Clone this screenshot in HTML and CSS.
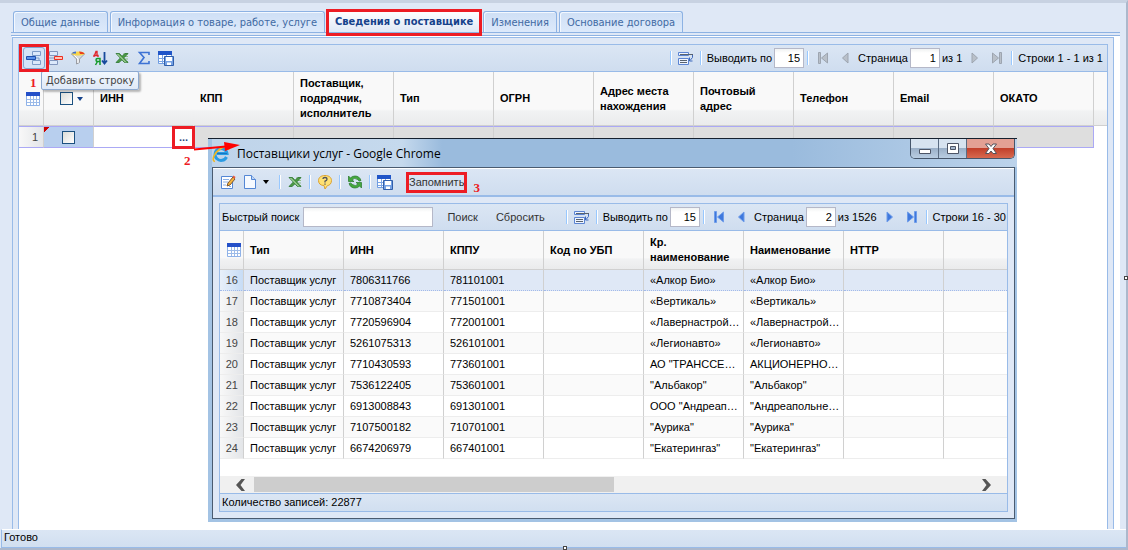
FILE: index.html
```html
<!DOCTYPE html>
<html lang="ru">
<head>
<meta charset="utf-8">
<title>Сведения о поставщике</title>
<link rel="stylesheet" href="styles.css">
</head>
<body>
<svg class="sprite" aria-hidden="true">
  <symbol id="grid" viewBox="0 0 14 14"><path d="M.5.5h13v13H.5z" fill="#fff" stroke="#8fb2e8"/><path d="M0 0h14v4H0z" fill="#2450c8"/><path d="M1 7.500h12M1 10.500h12M4.500 4v9M7.500 4v9M10.500 4v9" stroke="#9dbbe8"/></symbol>
  <symbol id="excel" viewBox="0 0 16 16"><path d="M9 4h5M9 6.500h5M8 9h6M9 11.500h5" stroke="#8fbd85"/><path d="M2 3.500h3.500L8 6.300l3-2.800h3L9.700 8l4.300 4.500h-3.500L8 9.800l-3 2.700H2L6.300 8z" fill="#4d9a45" stroke="#2b7530" stroke-width=".8"/><path d="M3.500 4l8.500 8.500" stroke="#d3ecc8"/></symbol>
  <symbol id="save-grid" viewBox="0 0 16 16"><path d="M.5 1.500h13v12H.5z" fill="#fff" stroke="#6f9de2"/><path d="M0 1h14v4H0z" fill="#2055c8"/><path d="M1 8.500h7M1 11.500h6M4.500 5v8M8.500 5v3" stroke="#7ca5e4"/><path d="M6.500 6.500h9v9h-9z" fill="#75a1e3" stroke="#315fab"/><path d="M8 7h6v4H8zM9 12.500h4V15H9z" fill="#fff"/></symbol>
  <symbol id="pages" viewBox="0 0 17 15"><path d="M1.500 1.500h10v3h-10zM1.500 7.500h10v6h-10z" fill="#eef4ff" stroke="#5b84d2"/><path d="M3 3.500h13M3 9.500h7M3 11.500h7" stroke="#59636e"/><path d="M15.500 4v2.500L13 9.500M12.500 6.500v3.500h3" fill="none" stroke="#3d68bd"/></symbol>
  <symbol id="first" viewBox="0 0 12 12"><path d="M1.500.5v11h2V.5zM10.500 1v10L4.500 6z" fill="var(--fill)" stroke="var(--line)"/></symbol>
  <symbol id="prev" viewBox="0 0 12 12"><path d="M9 1v10L3.500 6z" fill="var(--fill)" stroke="var(--line)"/></symbol>
  <symbol id="next" viewBox="0 0 12 12"><path d="M3 1v10l5.500-5z" fill="var(--fill)" stroke="var(--line)"/></symbol>
  <symbol id="last" viewBox="0 0 12 12"><path d="M8.500.5v11h2V.5zM1.500 1v10l6-5z" fill="var(--fill)" stroke="var(--line)"/></symbol>
</svg>
<div class="page">
  <nav class="tabs">
    <button class="tab">Общие данные</button>
    <button class="tab">Информация о товаре, работе, услуге</button>
    <button class="tab active marked">Сведения о поставщике</button>
    <button class="tab">Изменения</button>
    <button class="tab">Основание договора</button>
  </nav>
  <main class="workspace">
    <section class="panel">
      <div class="grid-box">
        <div class="toolbar">
          <span class="tool-wrap">
            <button class="tool pressed marked" aria-label="Добавить строку"><svg width="16" height="16" viewBox="0 0 16 16"><path d="M6.500 1.500h8v4h-8zM6.500 10.500h8v4h-8z" fill="#dce9fb" stroke="#7d9cc9"/><path d="M.5 6.500h9v3h-9z" fill="#5a92ea" stroke="#1f4fae"/><path d="M10 8h3v2" fill="none" stroke="#7d9cc9"/></svg></button>
            <span class="tooltip" role="tooltip">Добавить строку</span>
          </span>
          <button class="tool" aria-label="Удалить строку"><svg width="16" height="16" viewBox="0 0 16 16"><path d="M1.500 1.500h8v4h-8zM1.500 10.500h8v4h-8z" fill="#dce9fb" stroke="#8296bd"/><path d="M6.500 6.500h8v3h-8z" fill="#ffc3b5" stroke="#ee2f20"/><path d="M1 8h5" stroke="#8296bd"/></svg></button>
          <button class="tool" aria-label="Фильтр"><svg width="16" height="16" viewBox="0 0 16 16"><path d="M1.500 4l5 5v5l3-1.500V9l5-5z" fill="#d5d9df" stroke="#9a9ca2"/><path d="M4 5l4 4v4" fill="none" stroke="#fff"/><ellipse cx="8" cy="3.500" rx="6.500" ry="2" fill="#f7d54b"/><path d="M1.500 3.500Q3 1.500 6 1.500v2z" fill="#3d70d6"/><path d="M9 1.500q5 0 5.500 2.500H10z" fill="#e9401f"/></svg></button>
          <button class="tool" aria-label="Сортировка"><svg width="16" height="16" viewBox="0 0 16 16"><path d="M2 7V5.500h4V7M2.500 5.500L4 1.500h1V5.500" fill="none" stroke="#e0282f" stroke-width="1.400"/><path d="M8 15V8.500H5.500Q4 8.500 4 10t1.500 1.500H8M5.500 11.500L3.500 15" fill="none" stroke="#159a2b" stroke-width="1.500"/><path d="M12.500 2v11M10 10.500l2.500 3 2.500-3" fill="none" stroke="#174a9c" stroke-width="1.800"/></svg></button>
          <button class="tool" aria-label="Экспорт в Excel"><svg width="16" height="16"><use href="#excel"/></svg></button>
          <button class="tool" aria-label="Итоги"><svg width="16" height="16" viewBox="0 0 16 16"><path d="M13 5V2.500H3.500l4.500 5-4.500 6H13V11" fill="none" stroke="#3d72d4" stroke-width="1.600"/></svg></button>
          <button class="tool" aria-label="Сохранить вид"><svg width="16" height="16"><use href="#save-grid"/></svg></button>
          <div class="pager muted">
            <i class="sep"></i>
            <button class="tool" aria-label="Страницы"><svg width="17" height="15"><use href="#pages"/></svg></button>
            <i class="sep"></i>
            <label for="size-a">Выводить по</label><input class="num" id="size-a" value="15">
            <i class="sep"></i>
            <button class="tool" aria-label="Первая"><svg width="12" height="12"><use href="#first"/></svg></button>
            <button class="tool" aria-label="Назад"><svg width="12" height="12"><use href="#prev"/></svg></button>
            <label class="page-label" for="page-a">Страница</label><input class="num" id="page-a" value="1"><span class="total">из 1</span>
            <button class="tool" aria-label="Вперёд"><svg width="12" height="12"><use href="#next"/></svg></button>
            <button class="tool" aria-label="Последняя"><svg width="12" height="12"><use href="#last"/></svg></button>
            <i class="sep"></i>
            <span>Строки 1 - 1 из 1</span>
          </div>
        </div>
        <table class="grid main-grid">
          <colgroup><col class="c-num"><col class="c-check"><col class="c-std"><col class="c-std"><col class="c-std"><col class="c-std"><col class="c-std"><col class="c-std"><col class="c-std"><col class="c-std"><col class="c-std"><col class="c-std"><col></colgroup>
          <thead><tr>
            <th class="icon-cell"><svg width="14" height="14"><use href="#grid"/></svg></th>
            <th><div class="check-head"><input type="checkbox" aria-label="Выбрать все"><i class="caret"></i></div></th>
            <th class="open">ИНН</th><th>КПП</th><th>Поставщик,<br>подрядчик,<br>исполнитель</th><th>Тип</th><th>ОГРН</th><th>Адрес места<br>нахождения</th><th>Почтовый<br>адрес</th><th>Телефон</th><th>Email</th><th>ОКАТО</th><th class="tail"></th>
          </tr></thead>
          <tbody><tr>
            <td class="num-cell">1</td>
            <td class="check-cell dirty"><input type="checkbox" aria-label="Выбрать строку 1"></td>
            <td class="edit-cell"><button class="more marked">...</button></td>
            <td></td><td></td><td></td><td></td><td></td><td></td><td></td><td></td><td class="row-end"></td><td class="tail"></td>
          </tr></tbody>
        </table>
      </div>
    </section>
  </main>
  <footer class="status">Готово</footer>

  <section class="window" role="dialog" aria-labelledby="win-title">
    <header class="titlebar">
      <svg width="18" height="18" viewBox="0 0 18 18"><path d="M14.500 12A6 6 0 1 1 15 8.500H5" fill="none" stroke="#2a9be3" stroke-width="3"/><path d="M5 8.500h10" stroke="#1476c4"/><path d="M3 16.500C-1 16 2 8 8 4s10-3 8.500 1" fill="none" stroke="#f3b81e" stroke-width="1.600"/></svg>
      <h1 id="win-title">Поставщики услуг - Google Chrome</h1>
      <div class="win-buttons">
        <button aria-label="Свернуть"><svg width="14" height="12" viewBox="0 0 14 12"><path d="M1.500 6.500h11v4h-11z" fill="#fff" stroke="#4d5566"/></svg></button>
        <button aria-label="Развернуть"><svg width="14" height="12" viewBox="0 0 14 12"><path d="M1.500.5h11v10h-11z" fill="#fff" stroke="#4d5566"/><path d="M4.500 3.500h5v3h-5z" fill="#a4b6cc" stroke="#4d5566"/></svg></button>
        <button class="close" aria-label="Закрыть"><svg width="14" height="12" viewBox="0 0 14 12"><path d="M1.500 1h3.500l2 2.500L9 1h3.500L9 5.500l3.500 5H9L7 8l-2 2.500H1.500L5 5.500z" fill="#fff" stroke="#53515a"/></svg></button>
      </div>
    </header>
    <div class="win-body">
      <div class="toolbar win-tools">
        <button class="tool" aria-label="Изменить"><svg width="16" height="16" viewBox="0 0 16 16"><path d="M1.500 2.500h11v12h-11z" fill="#fff" stroke="#5487d5"/><path d="M3 5.500h6M3 8h5M3 11h3M9 12.500h2" stroke="#8bb0e6"/><path d="M7 12l1-3 5-6 2 2-5 6z" fill="#f5b33d" stroke="#7a5630"/><path d="M12.500 3l1-1.500L15.500 3l-1 2z" fill="#e55b40"/></svg></button>
        <button class="tool" aria-label="Создать"><svg width="16" height="16" viewBox="0 0 16 16"><path d="M2.500 1.500h7l4 4v9h-11z" fill="#f6faff" stroke="#5487d5"/><path d="M9.500 1.500v4h4" fill="#bfd6f5" stroke="#5487d5"/></svg></button>
        <button class="drop" aria-label="Варианты"><i class="caret dark"></i></button>
        <i class="sep"></i>
        <button class="tool" aria-label="Экспорт в Excel"><svg width="16" height="16"><use href="#excel"/></svg></button>
        <i class="sep"></i>
        <button class="tool" aria-label="Справка"><svg width="16" height="16" viewBox="0 0 16 16"><path d="M8 1.500c4 0 6.500 2 6.500 5s-2 5-4 5L8 15l-1-3.500c-3.500 0-5.500-2-5.500-5s2.500-5 6.500-5z" fill="#ffe173" stroke="#dba133"/><path d="M6 5q0-1.500 2-1.500T10 5.300Q10 6.500 8 7.200V8.500M8 9.500v1.200" fill="none" stroke="#52545c" stroke-width="1.300"/></svg></button>
        <i class="sep"></i>
        <button class="tool" aria-label="Обновить"><svg width="16" height="16" viewBox="0 0 16 16"><path d="M1.500 2v5.500H7L5 6q2.500-3 5.500-.5Q12.500 8 14 6.500 12.500 2 8 2 5 2 3.500 4z" fill="#45a73e" stroke="#26772a" stroke-width=".7"/><path d="M14.500 14V8.500H9L11 10q-2.500 3-5.500.5Q3.500 8 2 9.500 3.500 14 8 14q3 0 4.500-2z" fill="#45a73e" stroke="#26772a" stroke-width=".7"/></svg></button>
        <i class="sep"></i>
        <button class="tool" aria-label="Сохранить вид"><svg width="16" height="16"><use href="#save-grid"/></svg></button>
        <button class="text-btn remember marked">Запомнить</button>
        <span class="step step-three">3</span>
      </div>
      <div class="win-panel">
        <div class="toolbar">
          <label for="quick">Быстрый поиск</label><input class="search" id="quick">
          <button class="text-btn">Поиск</button><button class="text-btn">Сбросить</button>
          <div class="pager">
            <i class="sep"></i>
            <button class="tool" aria-label="Страницы"><svg width="17" height="15"><use href="#pages"/></svg></button>
            <i class="sep"></i>
            <label for="size-b">Выводить по</label><input class="num" id="size-b" value="15">
            <i class="sep"></i>
            <button class="tool" aria-label="Первая"><svg width="12" height="12"><use href="#first"/></svg></button>
            <button class="tool" aria-label="Назад"><svg width="12" height="12"><use href="#prev"/></svg></button>
            <label class="page-label" for="page-b">Страница</label><input class="num" id="page-b" value="2"><span class="total">из 1526</span>
            <button class="tool" aria-label="Вперёд"><svg width="12" height="12"><use href="#next"/></svg></button>
            <button class="tool" aria-label="Последняя"><svg width="12" height="12"><use href="#last"/></svg></button>
            <i class="sep"></i>
            <span>Строки 16 - 30</span>
          </div>
        </div>
        <table class="grid list-grid">
          <colgroup><col class="c-num"><col class="c-std"><col class="c-std"><col class="c-std"><col class="c-std"><col class="c-std"><col class="c-std"><col class="c-std"><col></colgroup>
          <thead><tr><th class="icon-cell"><svg width="14" height="14"><use href="#grid"/></svg></th><th>Тип</th><th>ИНН</th><th>КППУ</th><th>Код по УБП</th><th>Кр.<br>наименование</th><th>Наименование</th><th>HTTP</th><th></th></tr></thead>
          <tbody>
            <tr class="selected"><td class="num-cell">16</td><td>Поставщик услуг</td><td>7806311766</td><td>781101001</td><td></td><td>«Алкор Био»</td><td>«Алкор Био»</td><td></td><td></td></tr>
            <tr><td class="num-cell">17</td><td>Поставщик услуг</td><td>7710873404</td><td>771501001</td><td></td><td>«Вертикаль»</td><td>«Вертикаль»</td><td></td><td></td></tr>
            <tr><td class="num-cell">18</td><td>Поставщик услуг</td><td>7720596904</td><td>772001001</td><td></td><td>«Лавернастрой…</td><td>«Лавернастрой…</td><td></td><td></td></tr>
            <tr><td class="num-cell">19</td><td>Поставщик услуг</td><td>5261075313</td><td>526101001</td><td></td><td>«Легионавто»</td><td>«Легионавто»</td><td></td><td></td></tr>
            <tr><td class="num-cell">20</td><td>Поставщик услуг</td><td>7710430593</td><td>773601001</td><td></td><td>АО "ТРАНССЕ…</td><td>АКЦИОНЕРНО…</td><td></td><td></td></tr>
            <tr><td class="num-cell">21</td><td>Поставщик услуг</td><td>7536122405</td><td>753601001</td><td></td><td>"Альбакор"</td><td>"Альбакор"</td><td></td><td></td></tr>
            <tr><td class="num-cell">22</td><td>Поставщик услуг</td><td>6913008843</td><td>691301001</td><td></td><td>ООО "Андреап…</td><td>"Андреапольне…</td><td></td><td></td></tr>
            <tr><td class="num-cell">23</td><td>Поставщик услуг</td><td>7107500182</td><td>710701001</td><td></td><td>"Аурика"</td><td>"Аурика"</td><td></td><td></td></tr>
            <tr><td class="num-cell">24</td><td>Поставщик услуг</td><td>6674206979</td><td>667401001</td><td></td><td>"Екатерингаз"</td><td>"Екатерингаз"</td><td></td><td></td></tr>
          </tbody>
        </table>
        <div class="scroll">
          <button aria-label="Влево"><svg width="10" height="12" viewBox="0 0 10 12"><path d="M9 0H5.500L0 6l5.500 6H9L4.500 6z" fill="#555"/></svg></button>
          <div class="track"><div class="thumb"></div></div>
          <button aria-label="Вправо"><svg width="10" height="12" viewBox="0 0 10 12"><path d="M1 0h3.500L10 6l-5.500 6H1l4.500-6z" fill="#555"/></svg></button>
        </div>
        <div class="count">Количество записей: 22877</div>
      </div>
    </div>
  </section>

  <span class="step step-one">1</span>
  <span class="step step-two">2</span>
  <svg class="arrow" width="48" height="12" viewBox="0 0 48 12"><path d="M0 10.500l32-3" stroke="#f00" stroke-width="2"/><path d="M30 3l16 3-15 6z" fill="#f00"/></svg>
  <i class="handle bottom"></i><i class="handle side"></i>
</div>
</body>
</html>
```
FILE: styles.css
```css
:root {
  --edge: #99bbe8;
  --pale: #dfe8f6;
  --red: #ed1c24;
  --ui: "Liberation Sans", Arial, sans-serif;
  --tahoma: "DejaVu Sans Condensed", "DejaVu Sans", sans-serif;
}

* { box-sizing: border-box; }

body {
  margin: 0;
  font: 11px/15px var(--ui);
  color: #000;
}

button, input { font: inherit; color: inherit; margin: 0; }
button { padding: 0; border: 0; background: none; }
.sprite { position: absolute; width: 0; height: 0; }

.page {
  position: relative;
  display: flex;
  flex-direction: column;
  min-height: 100vh;
  border-top: 3px solid #c8d2e2;
  border-right: 2px solid #acb8cc;
  border-bottom: 2px solid #acb8cc;
  background: var(--pale);
}

.marked { position: relative; }
.marked::after {
  content: "";
  position: absolute;
  z-index: 3;
  inset: -3px;
  border: 3px solid var(--red);
}

/* Tabs */
.tabs {
  display: flex;
  align-items: flex-end;
  gap: 2px;
  height: 33px;
  margin: 0 6px 0 11px;
  padding: 0 2px 3px;
  border-bottom: 1px solid #8db2e3;
  background: linear-gradient(#8db2e3, #8db2e3) 0 29px / 100% 1px no-repeat;
}
.tab {
  height: 21px;
  padding: 0 7px;
  border: 1px solid #8db2e3;
  border-bottom: 0;
  border-radius: 3px 3px 0 0;
  background: linear-gradient(#cfdff5, #dce9fb);
  box-shadow: inset 1px 1px #f3f8ff;
  font-family: var(--tahoma);
  color: #416aa3;
  white-space: nowrap;
}
.tab.active {
  height: 22px;
  background: linear-gradient(#fff, #dfe8f6);
  color: #15428b;
  font-weight: bold;
}
.tab.active::after { inset: -2px -2px -4px; }

/* Main panel */
.workspace {
  flex: 1;
  display: flex;
  margin: 0 6px 0 12px;
  padding: 1px 6px 0 0;
  background: #fff;
}
.panel {
  flex: 1;
  display: flex;
  min-width: 0;
  padding: 6px 5px 0;
  border: 1px solid var(--edge);
  border-bottom: 0;
  background: var(--pale);
}
.grid-box {
  flex: 1;
  min-width: 0;
  border: 1px solid var(--edge);
  border-bottom: 0;
  background: #fff;
}

/* Toolbars */
.toolbar {
  display: flex;
  align-items: center;
  height: 27px;
  padding: 0 4px;
  border-bottom: 1px solid var(--edge);
  background: linear-gradient(#dbe6f4, #cfddef);
  white-space: nowrap;
}
.tool {
  display: flex;
  flex: none;
  align-items: center;
  justify-content: center;
  width: 22px;
  height: 22px;
}
.tool-wrap { position: relative; }
.pressed {
  border: 1px solid #81a4d0;
  border-radius: 3px;
  background: #d4e3f7;
}
.tool svg { flex: none; }
.pressed.marked::after { inset: -4px -5px; }
.tooltip {
  position: absolute;
  z-index: 2;
  top: 24px;
  left: 18px;
  height: 19px;
  padding: 1px 4px;
  border: 1px solid #8da9cf;
  border-radius: 2px;
  background: linear-gradient(#f3f8fe, #dfe9f7);
  box-shadow: 2px 2px 2px #0004;
  font-family: var(--tahoma);
  color: #444;
}
.sep {
  flex: none;
  width: 2px;
  height: 14px;
  margin: 0 3px;
  border-left: 1px solid #98c8ff;
  border-right: 1px solid #fff;
}
.pager {
  --fill: #3f78dd;
  --line: #6e9ce9;
  display: flex;
  align-items: center;
  margin-left: auto;
}
.pager.muted { --fill: #b9c0c9; --line: #9da5b0; }
.pager .sep + label, .pager .sep + span { margin-left: 2px; }
.pager label { margin-right: 2px; }
.page-label { margin-left: 2px; }
.total { margin: 0 2px; }
.num, .search {
  width: 30px;
  height: 20px;
  padding: 0 3px;
  border: 1px solid #b5b8c8;
  background: linear-gradient(#f0f2f2, #fff 4px);
  text-align: right;
}
.search { width: 130px; margin: 0 7px 0 4px; text-align: left; }
.text-btn { height: 19px; padding: 0 7px; color: #333; }
.text-btn + .text-btn { margin-left: 4px; }

/* Grids */
.grid {
  width: 100%;
  table-layout: fixed;
  border-collapse: separate;
  border-spacing: 0;
}
.c-num { width: 25px; }
.c-check { width: 50px; }
.c-std { width: 100px; }
.grid th, .grid td {
  overflow: hidden;
  padding: 0 6px;
  border-right: 1px solid #d0d0d0;
  text-align: left;
  white-space: nowrap;
}
.grid th {
  border-bottom: 1px solid #d0d0d0;
  background: linear-gradient(#f9f9f9 70%, #f1f2f3 74%, #eaebec);
}
.grid th:last-child, .grid td:last-child { border-right: 0; }
.grid th.icon-cell { padding: 0 0 0 7px; }
.grid .icon-cell svg { display: block; }
.grid .num-cell {
  padding: 0 5px 0 0;
  background: linear-gradient(90deg, #f8f8f8, #e3e5e8);
  color: #444;
  text-align: right;
}
.main-grid th { height: 54px; }
.grid th.open { border-right-color: transparent; }
.main-grid td {
  height: 22px;
  border-top: 1px solid #aba9f5;
  border-bottom: 1px solid #aba9f5;
  background: #dedede;
}
.main-grid td.tail { border: 0; background: #fff; }
.main-grid td.row-end { border-right-color: #aba9f5; }
.main-grid td.check-cell {
  background: linear-gradient(135deg, #c00 4px, transparent 4px), #b8cfee;
  text-align: center;
}
.main-grid td.edit-cell { overflow: visible; padding: 0 1px 0 0; background: #fff; text-align: right; }
.more { width: 17px; height: 17px; font-weight: bold; line-height: 12px; color: #2b4f83; }
input[type="checkbox"] {
  appearance: none;
  display: inline-block;
  width: 13px;
  height: 13px;
  border: 1px solid #1c5180;
  background: linear-gradient(135deg, #dcdcd7, #fff);
  vertical-align: middle;
}
.check-head { display: flex; align-items: center; gap: 4px; padding-left: 10px; }
.caret {
  width: 6px;
  border: 3px solid transparent;
  border-top: 4px solid #15428b;
  border-bottom: 0;
}
.caret.dark { border-top-color: #000; }

/* Status bar */
.status {
  height: 19px;
  margin-left: 1px;
  padding: 0 2px;
  border: 1px solid var(--edge);
  border-top-color: #fff;
  border-right: 0;
  background: linear-gradient(#dbe6f4, #d1dff0);
}

/* Floating window */
.window {
  position: absolute;
  top: 135px;
  left: 208px;
  right: 109px;
  padding: 0 2px 3px 4px;
  border-top: 1px solid #15202e;
  background: #a3c3e4;
}
.titlebar {
  display: flex;
  align-items: flex-start;
  gap: 7px;
  height: 28px;
  margin-right: -2px;
  padding: 6px 2px 0 0;
  background: linear-gradient(90deg, #bfd4ea, #c5d9ed 190px, #9abbdd 230px 580px, #bcd3eb);
}
.titlebar h1 {
  margin: 0;
  font: 12px/17px "Open Sans", "Noto Sans", sans-serif;
  white-space: nowrap;
}
.win-buttons {
  display: flex;
  align-self: flex-start;
  height: 20px;
  margin: -6px 0 0 auto;
  border: 1px solid #46566b;
  border-top: 0;
  border-radius: 0 0 5px 5px;
  overflow: hidden;
}
.win-buttons button {
  display: flex;
  align-items: center;
  justify-content: center;
  width: 28px;
  border-right: 1px solid #5b6c82;
  background: linear-gradient(#d7e3f0 45%, #9bb0c8 50%, #b9cde2);
}
.win-buttons .close {
  width: 47px;
  border-right: 0;
  background: linear-gradient(#e3a094 45%, #c2402b 50%, #d7694f);
}
.win-body {
  padding-bottom: 6px;
  border: 1px solid #4a5b70;
  background: var(--pale);
}
.win-tools {
  height: 29px;
  border-top: 1px solid #fff;
  border-bottom-width: 2px;
}
.drop { width: 10px; margin-right: 5px; }
.drop .caret { display: block; margin: auto; }
.remember { padding: 0; margin-left: 13px; height: 15px; }
.win-panel {
  margin: 6px 6px 0;
  border: 1px solid var(--edge);
  background: #fff;
}
.win-panel .toolbar { padding: 0 1px 0 2px; }
.list-grid { margin-bottom: 17px; }
.list-grid th { height: 39px; }
.list-grid td { height: 21px; border-bottom: 1px solid #ededed; }
.list-grid .c-num { width: 24px; }
.list-grid tr:nth-child(even) td:not(.num-cell) { background: #fafafa; }
.list-grid tr.selected td { border-bottom: 1px dotted #a3bae9; background: var(--pale); }
.list-grid tr.selected .num-cell { background: linear-gradient(90deg, #e8f0fa, #c7dcf5); }
.scroll {
  display: flex;
  align-items: center;
  height: 17px;
  padding: 0 16px;
  background: #f0f0f0;
}
.scroll button { width: 10px; display: flex; }
.track { flex: 1; margin: 0 8px; }
.thumb { width: 50%; height: 15px; background: #cdcdcd; }
.count {
  height: 18px;
  padding: 1px 2px;
  border-top: 1px solid var(--edge);
  background: linear-gradient(#dbe6f4, #d1dff0);
}

/* Step marks */
.step { color: var(--red); font: bold 13px/14px "Liberation Serif", serif; }
.step-one { position: absolute; top: 73px; left: 30px; }
.step-two { position: absolute; top: 151px; left: 184px; }
.step-three { margin: 12px 0 0 9px; }
.arrow { position: absolute; top: 136px; left: 194px; }
.handle {
  position: absolute;
  width: 4px;
  height: 4px;
  border: 1px solid #444;
  background: #fff;
}
.handle.bottom { bottom: -2px; left: 50%; }
.handle.side { right: -2px; top: 50%; }
```
